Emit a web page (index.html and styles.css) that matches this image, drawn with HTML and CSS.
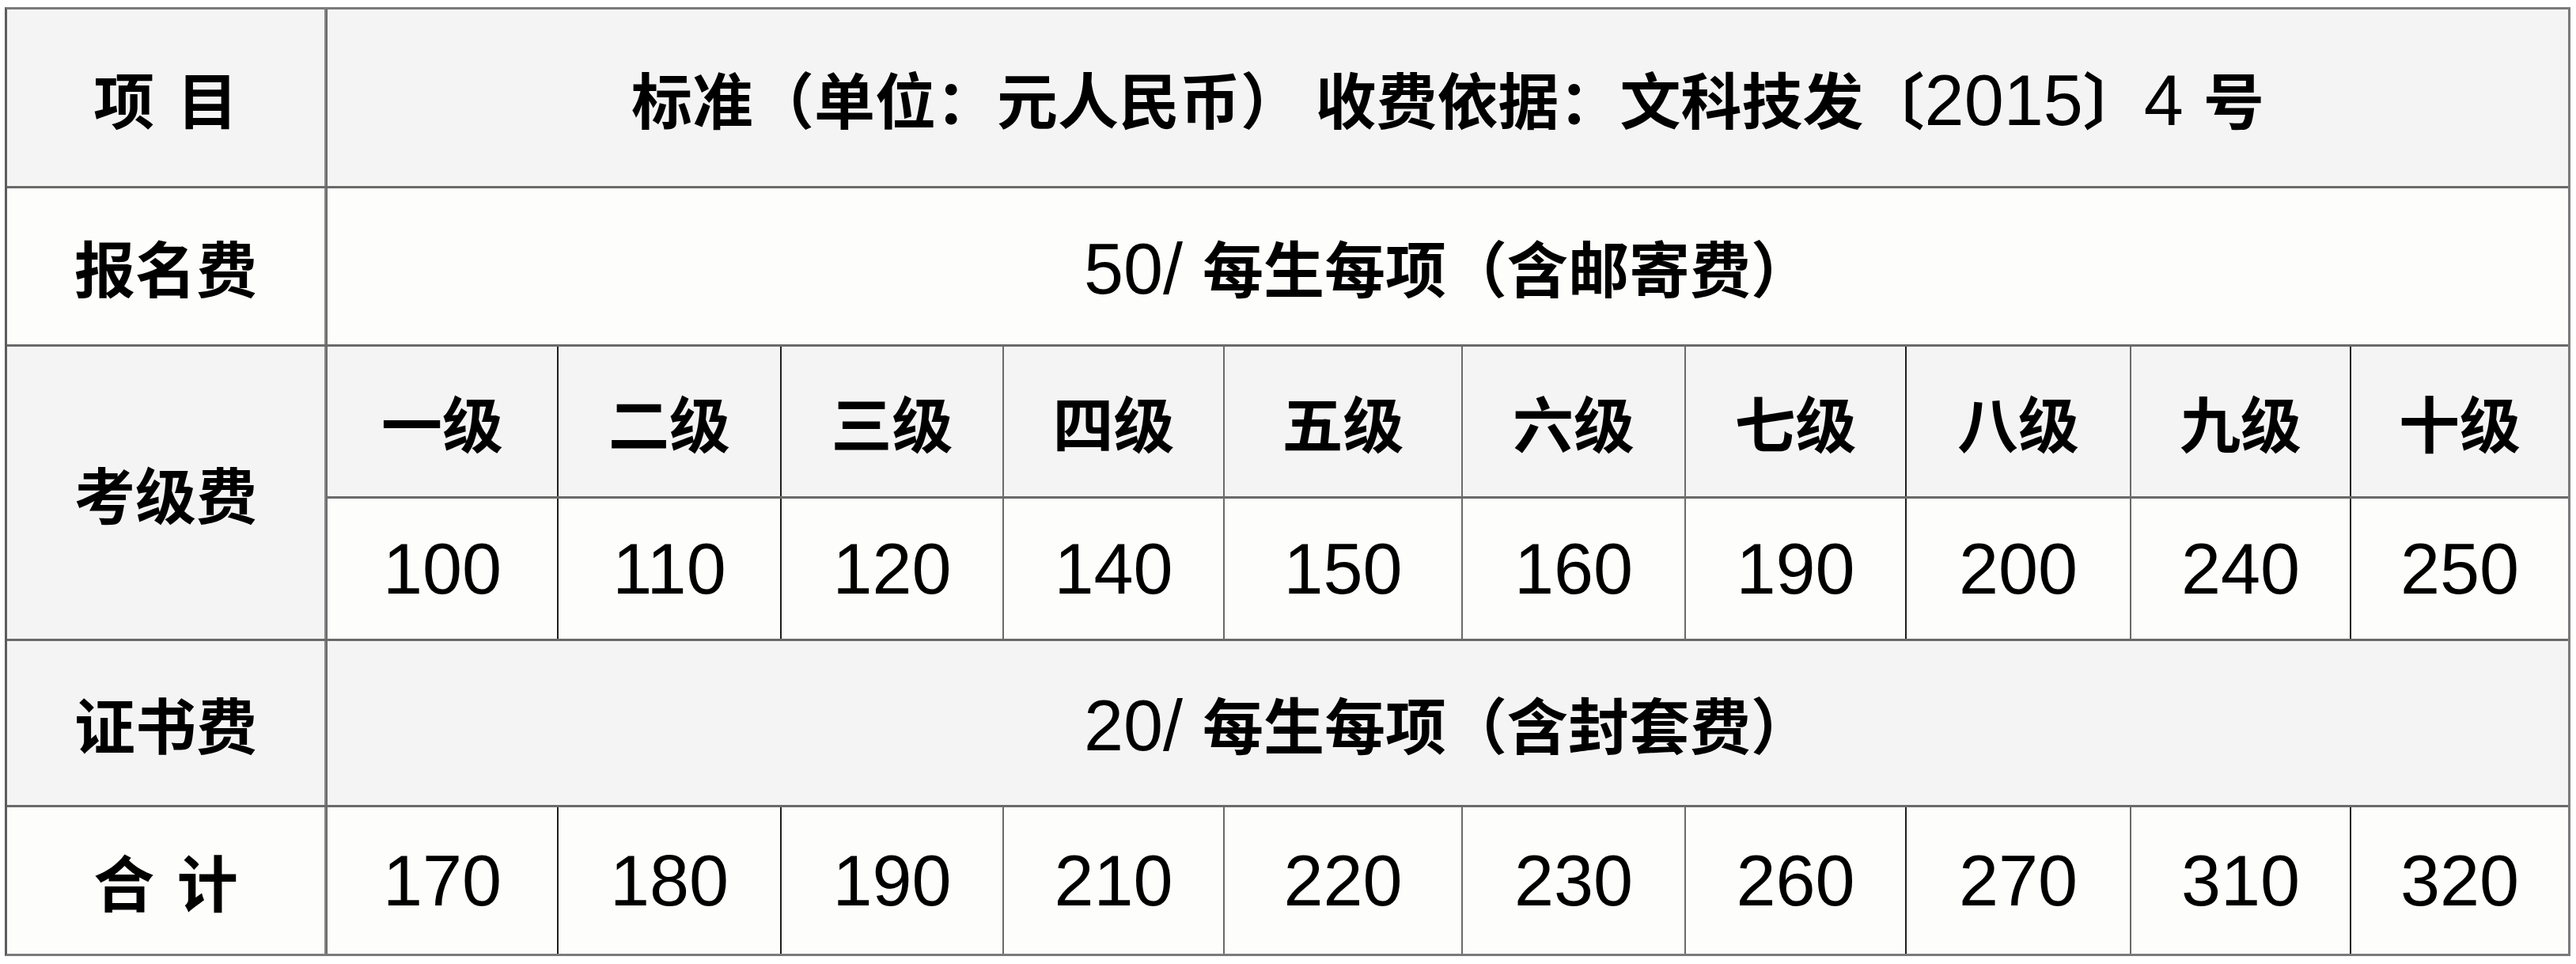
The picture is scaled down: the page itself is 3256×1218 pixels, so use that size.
FILE: index.html
```html
<!DOCTYPE html>
<html lang="zh-CN">
<head>
<meta charset="utf-8">
<title>收费标准</title>
<link rel="stylesheet" href="styles.css">
</head>
<body>
<div class="fee-table">
  <div class="cell gray lab">项 目</div>
  <div class="cell gray wide">标准（单位：元人民币） 收费依据：文科技发〔<span class="num">2015</span>〕<span class="num">4 </span>号</div>

  <div class="cell white lab">报名费</div>
  <div class="cell white wide"><span class="num">50/ </span>每生每项（含邮寄费）</div>

  <div class="cell gray lab tall">考级费</div>
  <div class="cell gray dk">一级</div>
  <div class="cell gray dk">二级</div>
  <div class="cell gray">三级</div>
  <div class="cell gray">四级</div>
  <div class="cell gray">五级</div>
  <div class="cell gray">六级</div>
  <div class="cell gray dk">七级</div>
  <div class="cell gray">八级</div>
  <div class="cell gray dk">九级</div>
  <div class="cell gray">十级</div>

  <div class="cell white num dk">100</div>
  <div class="cell white num dk">110</div>
  <div class="cell white num">120</div>
  <div class="cell white num">140</div>
  <div class="cell white num">150</div>
  <div class="cell white num">160</div>
  <div class="cell white num dk">190</div>
  <div class="cell white num">200</div>
  <div class="cell white num dk">240</div>
  <div class="cell white num">250</div>

  <div class="cell gray lab">证书费</div>
  <div class="cell gray wide"><span class="num">20/ </span>每生每项（含封套费）</div>

  <div class="cell white lab">合 计</div>
  <div class="cell white num dk">170</div>
  <div class="cell white num dk">180</div>
  <div class="cell white num">190</div>
  <div class="cell white num">210</div>
  <div class="cell white num">220</div>
  <div class="cell white num">230</div>
  <div class="cell white num dk">260</div>
  <div class="cell white num">270</div>
  <div class="cell white num dk">310</div>
  <div class="cell white num">320</div>
</div>
</body>
</html>
```

FILE: styles.css
```css
html, body {
  margin: 0;
  background: #ffffff;
}

.fee-table {
  display: grid;
  grid-template-columns: 403px 290px 280px 279px 277px 299px 280px 277px 282px 276px 274px;
  grid-template-rows: 223px 197px 189px 177px 207px 185px;
  gap: 3px 2px;
  width: max-content;
  margin: 9px 0 0 6px;
  background: #6a6a6a;
  border: 3px solid #7a7a7a;
  border-left-color: #5c5c5c;
  font-family: "Noto Sans CJK SC", "Noto Sans CJK TC", sans-serif;
  font-weight: 700;
  font-size: 77px;
  color: #000000;
}

.cell {
  display: flex;
  align-items: center;
  justify-content: center;
  line-height: 1;
  white-space: pre;
}

.gray {
  background: #f4f4f4;
}

.white {
  background: #fdfdfc;
}

.lab {
  border-right: 2px solid #858585;
  word-spacing: 11px;
}

.wide {
  grid-column: span 10;
}

.tall {
  grid-row: span 2;
}

.num {
  font-family: "Liberation Sans", Arial, sans-serif;
  font-weight: 400;
  font-size: 90px;
}

.wide .num {
  position: relative;
  top: 3px;
}

.dk {
  box-shadow: 2px 0 0 #1e1e1e;
}
```
